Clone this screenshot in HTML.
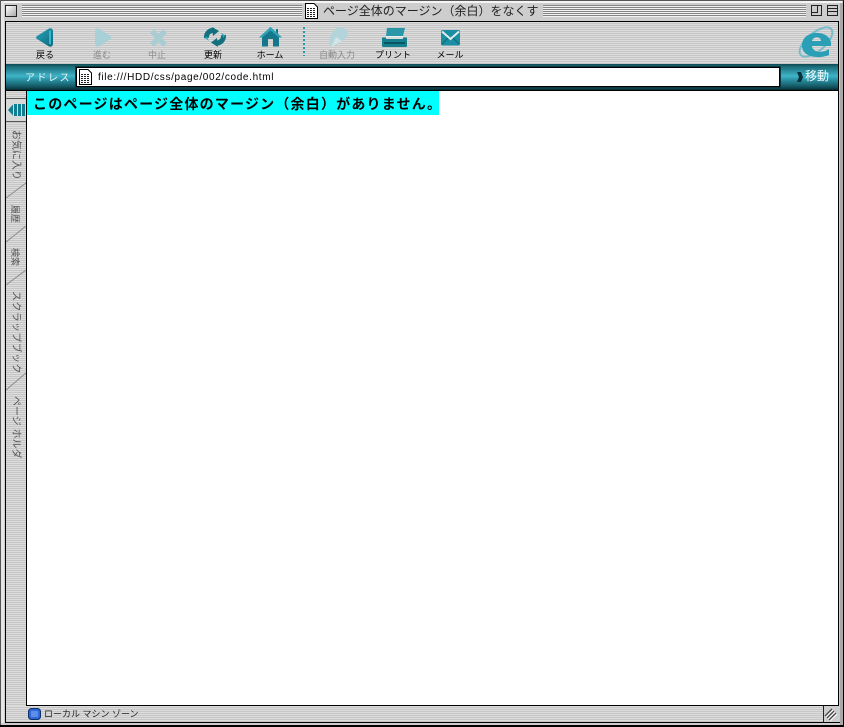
<!DOCTYPE html>
<html lang="ja"><head><meta charset="utf-8"><title>ページ全体のマージン（余白）をなくす</title>
<style>
html,body{margin:0;padding:0;background:#ccc}
#w{position:relative;width:844px;height:727px;overflow:hidden;background:#cfcfcf;font-family:"Liberation Sans","Noto Sans CJK JP",sans-serif}
#w div,#w svg{position:absolute;display:block}
.stripe{background:repeating-linear-gradient(to bottom,#dcdcdc 0,#dcdcdc 1px,#c6c6c6 1px,#c6c6c6 2px)}
.tl{background:repeating-linear-gradient(to bottom,#858585 0,#858585 1px,#f2f2f2 1px,#f2f2f2 2px)}
.lb{font-size:9px;line-height:12px;color:#000;text-align:center;white-space:nowrap;width:70px;top:49px}
.dis{color:#8a8a8a}
.tab{font-size:10px;line-height:12px;color:#555;white-space:nowrap;transform-origin:0 0;transform:rotate(90deg);left:15px}
</style></head><body>
<div id="w">
<div style="left:0;top:0;width:844px;height:727px;box-sizing:border-box;border:1px solid #000;border-top-color:#555;border-left-color:#555;background:#cdcdcd"></div>
<div style="left:1px;top:1px;width:841px;height:2px;background:#f4f4f4"></div>
<div style="left:1px;top:1px;width:3px;height:722px;background:#e6e6e6"></div>
<div style="left:0;top:725px;width:844px;height:2px;background:#000"></div>
<div style="left:840px;top:3px;width:3px;height:722px;background:#a8a8a8"></div>

<div class="tl" style="left:22px;top:5px;width:280px;height:12px"></div>
<div class="tl" style="left:543px;top:5px;width:263px;height:12px"></div>
<div style="left:5px;top:5px;width:10px;height:10px;border:1px solid #222;background:linear-gradient(135deg,#fff,#aaa)"></div>
<svg style="left:304px;top:2px" width="15" height="18"><path d="M1.500 1.500H10L13.500 5V16.500H1.500Z" fill="#fff" stroke="#000"/><path d="M3 6.500h9M3 8.500h9M3 10.500h9M3 12.500h9M3 14.500h9" stroke="#222" stroke-dasharray="2 1"/></svg>
<div style="left:323px;top:3px;font-size:12px;line-height:16px;color:#222;white-space:nowrap">ページ全体のマージン（余白）をなくす</div>
<svg style="left:811px;top:5px" width="30" height="13"><rect x=".5" y=".5" width="10" height="10" fill="#ccc" stroke="#222"/><path d="M1 7.500H6.500V1" fill="none" stroke="#222"/><rect x="16.500" y=".5" width="10" height="10" fill="#ccc" stroke="#222"/><path d="M17 3.500H26M17 6.500H26" stroke="#222"/></svg>

<div style="left:5px;top:21px;width:834px;height:1px;background:#000"></div>
<div style="left:5px;top:21px;width:1px;height:702px;background:#000"></div>
<div style="left:838px;top:21px;width:1px;height:685px;background:#000"></div>

<div class="stripe" style="left:6px;top:22px;width:832px;height:42px"></div>

<svg style="left:36px;top:28px" width="18" height="19" viewBox="0 0 18 19"><defs><linearGradient id="g1" x1="0" y1="0" x2="1" y2="1"><stop offset="0" stop-color="#2aa2b8"/><stop offset="1" stop-color="#0d6a7c"/></linearGradient></defs><path d="M0 9.500Q0 8.500 1 8L13 .5Q16.500 -.5 17 3V16Q16.500 19.500 13 18.500L1 11Q0 10.500 0 9.500Z" fill="url(#g1)"/><path d="M13 3 15 2.500V16.500L13 16Z" fill="#37b6ca"/></svg>
<svg style="left:94px;top:28px" width="18" height="19" viewBox="0 0 18 19"><path d="M17.500 9.500Q17.500 8.500 16.500 8L5 .5Q1.500 -.5 1 3V16Q1.500 19.500 5 18.500L16.500 11Q17.500 10.500 17.500 9.500Z" fill="#a9d0d7"/></svg>
<svg style="left:149px;top:28px" width="19" height="20" viewBox="0 0 19 20"><path d="M3 3 16 17M16 3 3 17" stroke="#aacdd3" stroke-width="5.500"/></svg>
<svg style="left:203px;top:27px" width="24" height="20" viewBox="0 0 24 20"><path d="M3.500 11C3 6 7 3 11 3.500" fill="none" stroke="#12707f" stroke-width="5"/><path d="M9 0 16 4 10 9Z" fill="#12707f"/><path d="M20.500 8C21 13 17 16.500 13 16" fill="none" stroke="#12707f" stroke-width="5"/><path d="M15 20 8 15.500 14 11Z" fill="#12707f"/><path d="M18 5.500l4 3-1.500 2.500ZM6 14l-4-3 1.500-2Z" fill="#2da5ba"/></svg>
<svg style="left:259px;top:27px" width="23" height="20" viewBox="0 0 23 20"><path d="M17 2H19V8H17Z" fill="#14788a"/><path d="M11.500 0 23 10.500H20V19.500H14V12H9V19.500H3V10.500H0Z" fill="#14788a"/><path d="M11.500 0 0 10.500H3L11.500 3.500 20 10.500H23Z" fill="#2ea3b6"/></svg>
<div style="left:303px;top:27px;width:2px;height:29px;background:repeating-linear-gradient(to bottom,#2a9aa8 0,#2a9aa8 2px,transparent 2px,transparent 4px)"></div>
<svg style="left:328px;top:26px" width="21" height="22" viewBox="0 0 21 22"><path d="M10 1Q17 1 20 6 19 12 14 15 10 19 3 21 0 16 2 12 4 5 10 1Z" fill="#b2d4da"/><path d="M3 21 8 11 14 15Z" fill="#d4e4e6"/></svg>
<svg style="left:381px;top:27px" width="27" height="21" viewBox="0 0 27 21"><path d="M6 1H24L22 9H5Z" fill="#2a97a8"/><path d="M5 9H22V10.500H5Z" fill="#e2f0f0"/><path d="M1 10.500H5V12H22V10.500H26V19Q26 20 25 20H2Q1 20 1 19Z" fill="#14808f"/><rect x="3" y="15" width="21" height="2" fill="#0a5563"/></svg>
<svg style="left:441px;top:30px" width="19" height="16" viewBox="0 0 19 16"><rect x="0" y="0" width="19" height="15.500" rx="1.500" fill="#1a8ea2"/><path d="M1 1.500 9.500 9 18 1.500" fill="none" stroke="#e4ecec" stroke-width="2"/><path d="M1 14 7 8M18 14 12 8" stroke="#0f6676"/></svg>

<div class="lb" style="left:10px;top:49px">戻る</div>
<div class="lb dis" style="left:67px">進む</div>
<div class="lb dis" style="left:122px">中止</div>
<div class="lb" style="left:178px">更新</div>
<div class="lb" style="left:235px">ホーム</div>
<div class="lb dis" style="left:302px">自動入力</div>
<div class="lb" style="left:358px">プリント</div>
<div class="lb" style="left:415px">メール</div>

<svg style="left:799px;top:25px;overflow:visible" width="36" height="36" viewBox="0 0 36 36"><ellipse cx="17" cy="17" rx="20" ry="9" transform="rotate(-40 17 17)" fill="none" stroke="#78bcc9" stroke-width="2"/><path d="M32 21H13C13 27 23 29 30 24V30C21 34 3 33 3 20.500 3 10 14 7 20 8 28 9 33 14 32 21ZM13 16H22C22 11 14 11 13 16Z" fill="#2a9fb6" fill-rule="evenodd"/></svg>

<div style="left:6px;top:64px;width:832px;height:26px;background:linear-gradient(to bottom,#0f4a52 0,#1c6f7c 3px,#3fb4c8 12px,#2d98ab 15px,#12535e 23px,#062c33 26px)"></div>
<div style="left:25px;top:71px;font-size:10px;line-height:13px;color:#e8f6f8;white-space:nowrap;letter-spacing:1.500px;margin-top:1px">アドレス :</div>
<div style="left:76px;top:67px;width:702px;height:18px;background:#fff;border:1px solid #000;outline:1px solid #0b3a42"></div>
<svg style="left:78px;top:68px" width="15" height="18"><path d="M1.500 1.500H10L13.500 5V16.500H1.500Z" fill="#fff" stroke="#000"/><path d="M3 6.500h9M3 8.500h9M3 10.500h9M3 12.500h9M3 14.500h9" stroke="#222" stroke-dasharray="2 1"/></svg>
<div style="left:98px;top:71px;margin-top:1px;font-size:10px;line-height:12px;color:#000;white-space:nowrap;letter-spacing:.65px">file:///HDD/css/page/002/code.html</div>
<svg style="left:796px;top:72px" width="7" height="10"><path d="M1 0 5 0 7 5 5 10 1 10 3 5Z" fill="#06303a"/></svg>
<div style="left:805px;top:69px;font-size:12px;line-height:14px;white-space:nowrap;color:#f4fafc">移動</div>
<div style="left:6px;top:90px;width:832px;height:1px;background:#000"></div>

<div style="left:26px;top:91px;width:812px;height:614px;background:#fff"></div>
<div style="left:26px;top:91px;width:1px;height:615px;background:#000"></div>
<div style="left:27px;top:91px;width:412px;height:24px;background:#0ff"></div>
<div style="left:33px;top:96px;font-size:14px;line-height:16px;font-weight:bold;color:#000;white-space:nowrap;letter-spacing:1.2px">このページはページ全体のマージン（余白）がありません。</div>

<div class="stripe" style="left:6px;top:91px;width:20px;height:615px;overflow:hidden">
 <div style="left:0;top:7px;width:20px;height:1px;background:#555"></div>
 <div style="left:0;top:30px;width:20px;height:1px;background:#555"></div>
 <div style="left:0;top:8px;width:20px;height:22px;background:#d8d8d8"></div>
 <svg style="left:2px;top:12px" width="18" height="15"><path d="M0 7 5 1.500V12.500Z" fill="#117d90"/><path d="M6 1H9V13H6ZM10 1H13V13H10ZM14 1H17V13H14Z" fill="#117d90"/></svg>
 <svg style="left:0;top:0" width="20" height="615"><path d="M0 107 20 92M0 151 20 135M0 194 20 179M0 299 20 282" stroke="#8c8c8c" fill="none"/></svg>
 <div class="tab" style="top:39px">お気に入り</div>
 <div class="tab" style="top:114px;font-size:9px">履歴</div>
 <div class="tab" style="top:157px;font-size:9px">検索</div>
 <div class="tab" style="top:200px;letter-spacing:.35px">スクラップブック</div>
 <div class="tab" style="top:305px">ページ ホルダ</div>
</div>

<div style="left:26px;top:705px;width:813px;height:1px;background:#000"></div>
<div class="stripe" style="left:6px;top:706px;width:817px;height:16px"></div>
<div style="left:5px;top:722px;width:835px;height:1px;background:#000"></div>
<div style="left:823px;top:706px;width:1px;height:16px;background:#222"></div>
<div style="left:824px;top:706px;width:14px;height:16px;background:#cdcdcd"></div>
<svg style="left:824px;top:707px" width="14" height="14"><path d="M1 9 8 2M3 11 10 4M5 13 12 6" stroke="#444" stroke-width="1.300"/><path d="M2 10 9 3M4 12 11 5M6 14 13 7" stroke="#fff" stroke-width="1"/></svg>
<svg style="left:28px;top:708px" width="14" height="13"><rect x=".5" y=".5" width="12" height="11" rx="3" fill="#2f66d8" stroke="#0c2f6a"/><rect x="3" y="3" width="7" height="6" rx="1" fill="#5f8eea"/></svg>
<div style="left:44px;top:708px;font-size:9px;line-height:12px;color:#222;white-space:nowrap">ローカル マシン ゾーン</div>
</div>
</body></html>
